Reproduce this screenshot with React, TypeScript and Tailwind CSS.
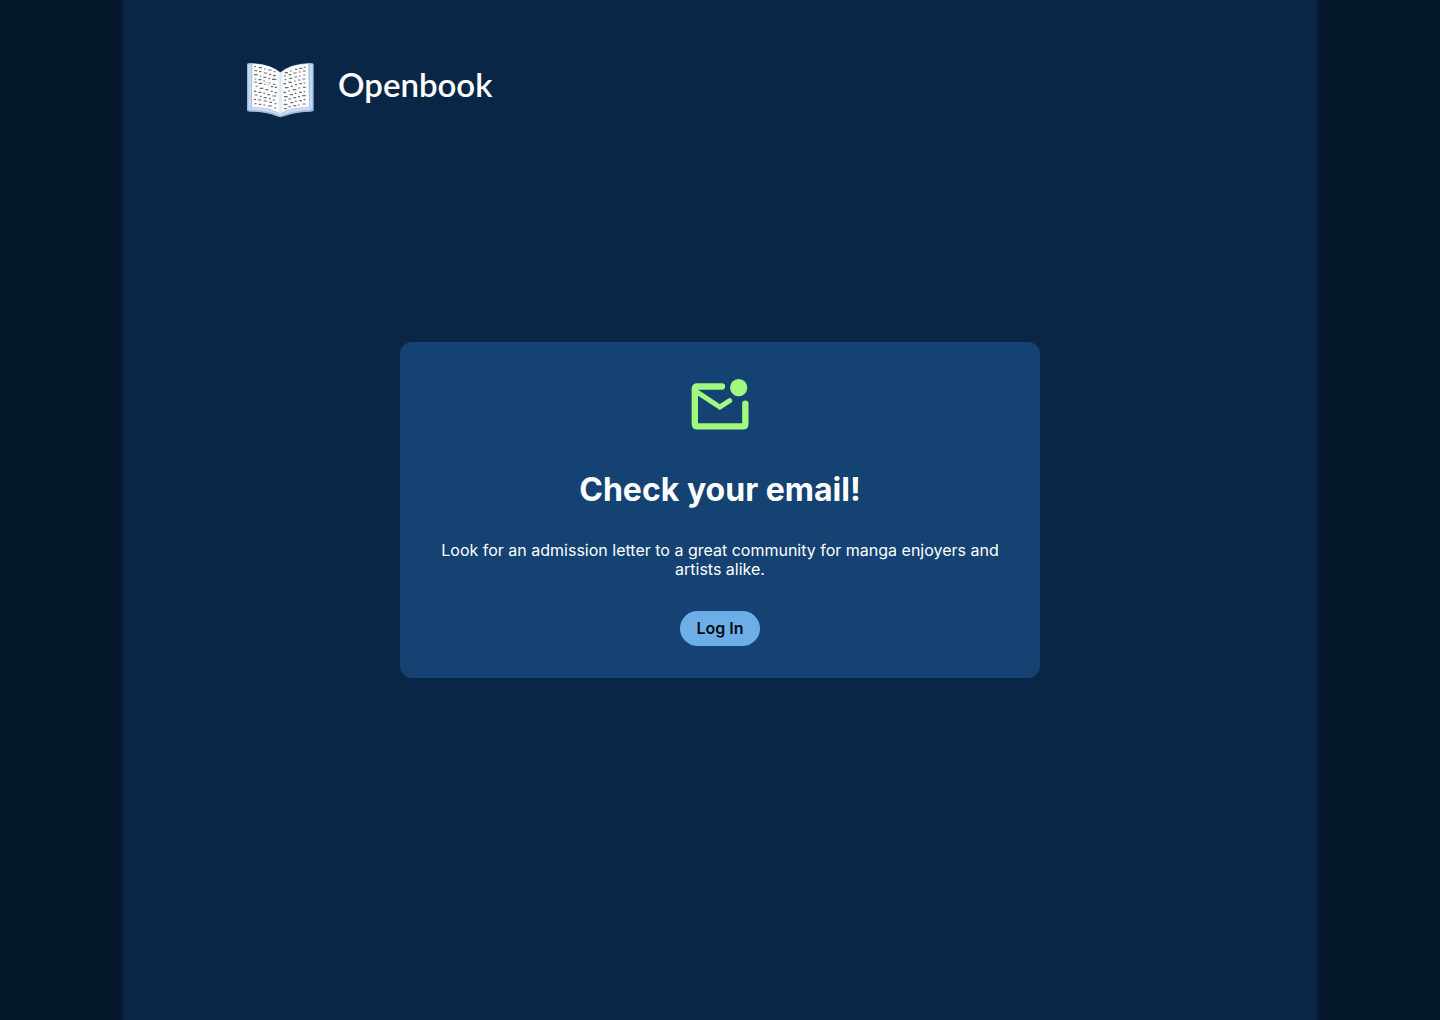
import React from "react";

const leftRows = [
  "M43 32h5M57 35h9M72 39h5M84 42h11M101 47h5",
  "M44 43l8 2M57 47h7M71 51h10M87 55h6M99 59h9",
  "M42 56h11M59 60h5M70 64h9M85 68h5M96 70h13",
  "M44 69h5M55 71h9M70 75h5M80 79h2M87 81h5M99 85h7",
  "M42 78h9M56 82h11M73 85h4M83 87h3M92 92h7M104 94h7",
  "M47 91h5M59 97h11M76 101h9M92 106h6M104 110h7",
  "M42 106h7M55 109h9M70 112h5M82 116h8M97 120h12",
  "M44 117h9M60 121h5M71 125h9M87 128h5M98 132h7",
  "M42 130h6M54 132h10M71 135h10M88 139h8M104 143h5",
  "M44 143h5M56 145h8M70 147h6M84 150h12M103 156h6",
];

const rightRows = [
  "M191 34h5M178 37h9M165 40h7M150 45h5M134 50h10",
  "M188 45h9M176 48h6M160 51h10M146 56h8M132 60h6",
  "M190 57h6M177 60h5M163 63h9M148 67h9M134 71h5",
  "M187 69h9M174 72h7M162 75h5M145 79h11M130 83h8",
  "M191 81h5M178 83h8M165 86h6M152 91h7M135 95h11",
  "M189 94h8M175 96h5M158 101h11M144 105h6M130 109h8",
  "M191 107h4M177 109h9M164 112h5M149 116h10M132 122h11",
  "M187 119h10M174 122h6M160 125h8M145 129h9M133 133h5",
  "M191 131h5M178 134h8M165 136h5M151 140h9M131 145h11",
  "M188 144h9M174 147h5M160 149h9M146 152h6M132 158h8",
];

function BookLogo() {
  return (
    <svg className="h-[68px] w-20" viewBox="0 0 240 204" fill="none" aria-hidden="true">
      <path
        d="M21 24Q22 20 36 21Q94 24 121 49Q150 24 205 21Q219 20 221 24V162Q222 166 211 167Q160 169 132 181Q121 186 110 181Q80 168 31 167Q20 166 21 162Z"
        fill="#9dbade"
      />
      <path d="M24 26L34 24V155L25 161ZM218 26L209 24V155L217 161Z" fill="#c6d8ef" />
      <path d="M27 161L37 154Q86 154 121 175Q158 154 206 154L215 161Q164 163 130 176Q121 181 112 176Q82 163 27 161Z" fill="#cddcf0" />
      <path d="M37 23Q96 26 121 51V173Q88 152 36 153Z" fill="#fff" />
      <path d="M205 23Q146 26 121 51V173Q154 152 207 153Z" fill="#fff" />
      <path d="M114 46L121 51L128 46V168L121 173L114 168Z" fill="#eef3fa" />
      <path d="M121 51V176" stroke="#bdcde2" strokeWidth="1" />
      <g stroke="#6a6e76" strokeWidth="3.5">
        {leftRows.map((d) => (
          <path key={d} d={d} />
        ))}
        {rightRows.map((d) => (
          <path key={d} d={d} />
        ))}
      </g>
    </svg>
  );
}

function MailIcon() {
  return (
    <svg className="size-16" viewBox="24 12 192 192" fill="none" aria-hidden="true">
      <path
        d="M126 49.500H52Q44.500 49.500 44.500 57V162Q44.500 169 52 169H189Q196 169 196 162V101"
        stroke="#a1fa7d"
        strokeWidth="19"
        strokeLinecap="round"
      />
      <path d="M48 64L119.500 111L149 92" stroke="#a1fa7d" strokeWidth="15" strokeLinecap="round" />
      <circle cx="176" cy="53" r="26" fill="#a1fa7d" />
    </svg>
  );
}

export default function App() {
  return (
    <div className="min-h-screen bg-[#05182c] font-['Inter',sans-serif] text-white">
      <div className="mx-auto grid min-h-screen max-w-[1194px] grid-rows-[1fr_auto_1fr] bg-[#092646]">
        <header className="flex items-start px-[117px] pt-14">
          <div className="flex items-start gap-[18px]">
            <BookLogo />
            <span className="pt-2 font-['Lato',sans-serif] text-[33px] leading-10 font-semibold">Openbook</span>
          </div>
        </header>
        <main className="mx-auto flex w-full max-w-[640px] flex-col items-center gap-8 rounded-xl bg-[#144272] p-8 text-center">
          <MailIcon />
          <h1 className="text-[32px] leading-[39px] font-bold">Check your email!</h1>
          <p className="text-base leading-[19px] font-normal">
            Look for an admission letter to a great community for manga enjoyers and artists alike.
          </p>
          <button type="button" className="cursor-pointer rounded-full bg-[#6eaee7] px-4 py-2 text-base leading-[19px] font-semibold text-[#020c16]">
            Log In
          </button>
        </main>
      </div>
    </div>
  );
}
